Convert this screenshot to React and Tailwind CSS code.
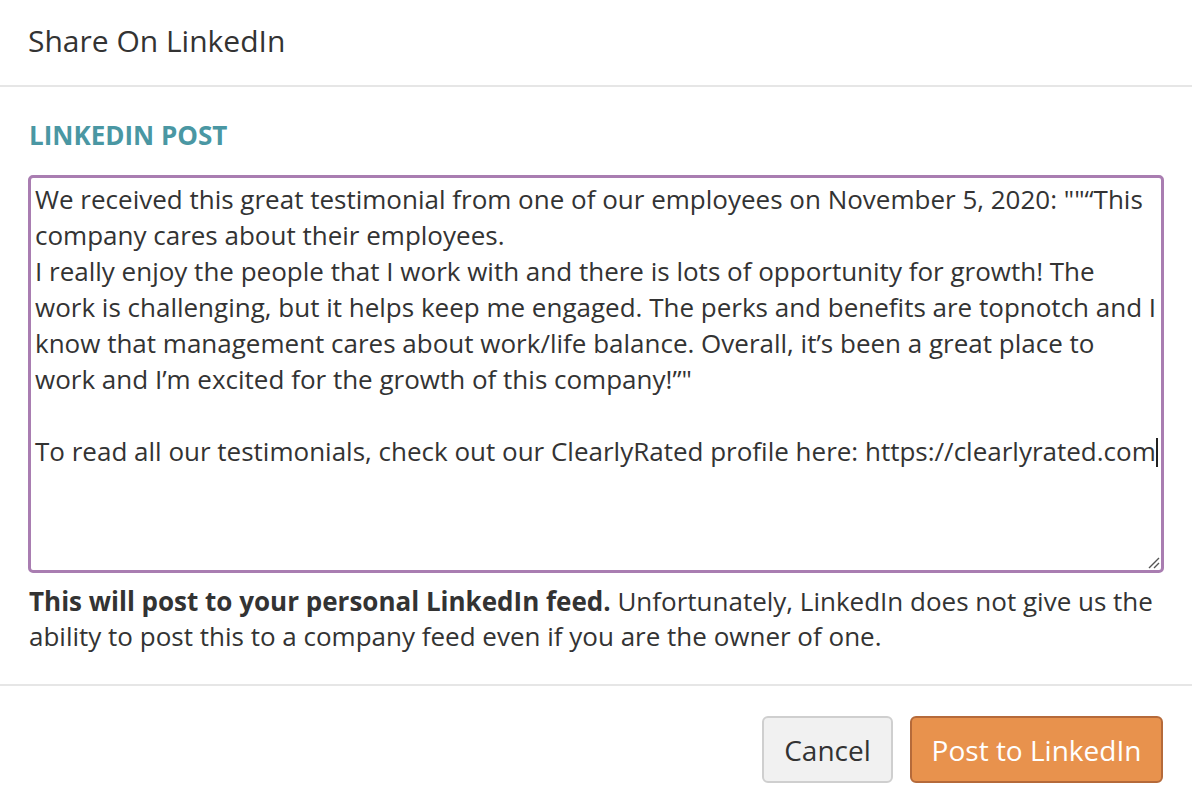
export default function App() {
  const lines = [
    'We received this great testimonial from one of our employees on November 5, 2020: ""\u201CThis',
    'company cares about their employees.',
    'I really enjoy the people that I work with and there is lots of opportunity for growth! The',
    'work is challenging, but it helps keep me engaged. The perks and benefits are topnotch and I',
    'know that management cares about work/life balance. Overall, it\u2019s been a great place to',
    'work and I\u2019m excited for the growth of this company!\u201D"',
    '',
  ];
  return (
    <div className="w-[1192px] h-[810px] bg-white text-[#333333] font-['Open_Sans',sans-serif]">
      <header className="h-[87px] px-[28px] flex items-center border-b-2 border-[#e6e6e6]">
        <h1 className="text-[30px] leading-none -mt-[4px]">Share On LinkedIn</h1>
      </header>
      <section className="px-[28px] pt-[33px]">
        <div className="text-[26px] font-bold text-[#4a97a3] leading-[30px] pl-[1px]">LINKEDIN POST</div>
        <div className="relative mt-[25px] h-[398px] border-[3px] border-[#a97db1] rounded-[5px] pl-[4px] pt-[3px] text-[26px] leading-[36px] whitespace-pre">
          {lines.map((l, i) => (
            <div key={i} className="h-[36px]">{l}</div>
          ))}
          <div className="h-[36px]">
            To read all our testimonials, check out our ClearlyRated profile here: https://clearlyrated.com
            <span className="inline-block w-[2px] h-[29px] bg-[#222] align-[-6px]" />
          </div>
          <svg className="absolute right-[1px] bottom-[1px]" width="14" height="14" viewBox="0 0 14 14">
            <path d="M13 3 L3 13 M13 8 L8 13" stroke="#555" strokeWidth="1.4" fill="none" />
          </svg>
        </div>
        <p className="mt-[11px] text-[26px] leading-[35px] pl-[1px]">
          <b className="font-bold">This will post to your personal LinkedIn feed.</b> Unfortunately, LinkedIn does not give us the ability to post this to a company feed even if you are the owner of one.
        </p>
      </section>
      <footer className="mt-[30px] border-t-2 border-[#e6e6e6] px-[29px] pt-[30px] flex justify-end gap-[17px]">
        <button className="h-[67px] w-[131px] rounded-[6px] border-2 border-[#cfcfcf] bg-[#f1f1f1] text-[28px] text-[#333]">Cancel</button>
        <button className="h-[67px] w-[253px] rounded-[6px] border-2 border-[#b56a3a] bg-[#e8924d] text-[28px] text-white">Post to LinkedIn</button>
      </footer>
    </div>
  );
}
